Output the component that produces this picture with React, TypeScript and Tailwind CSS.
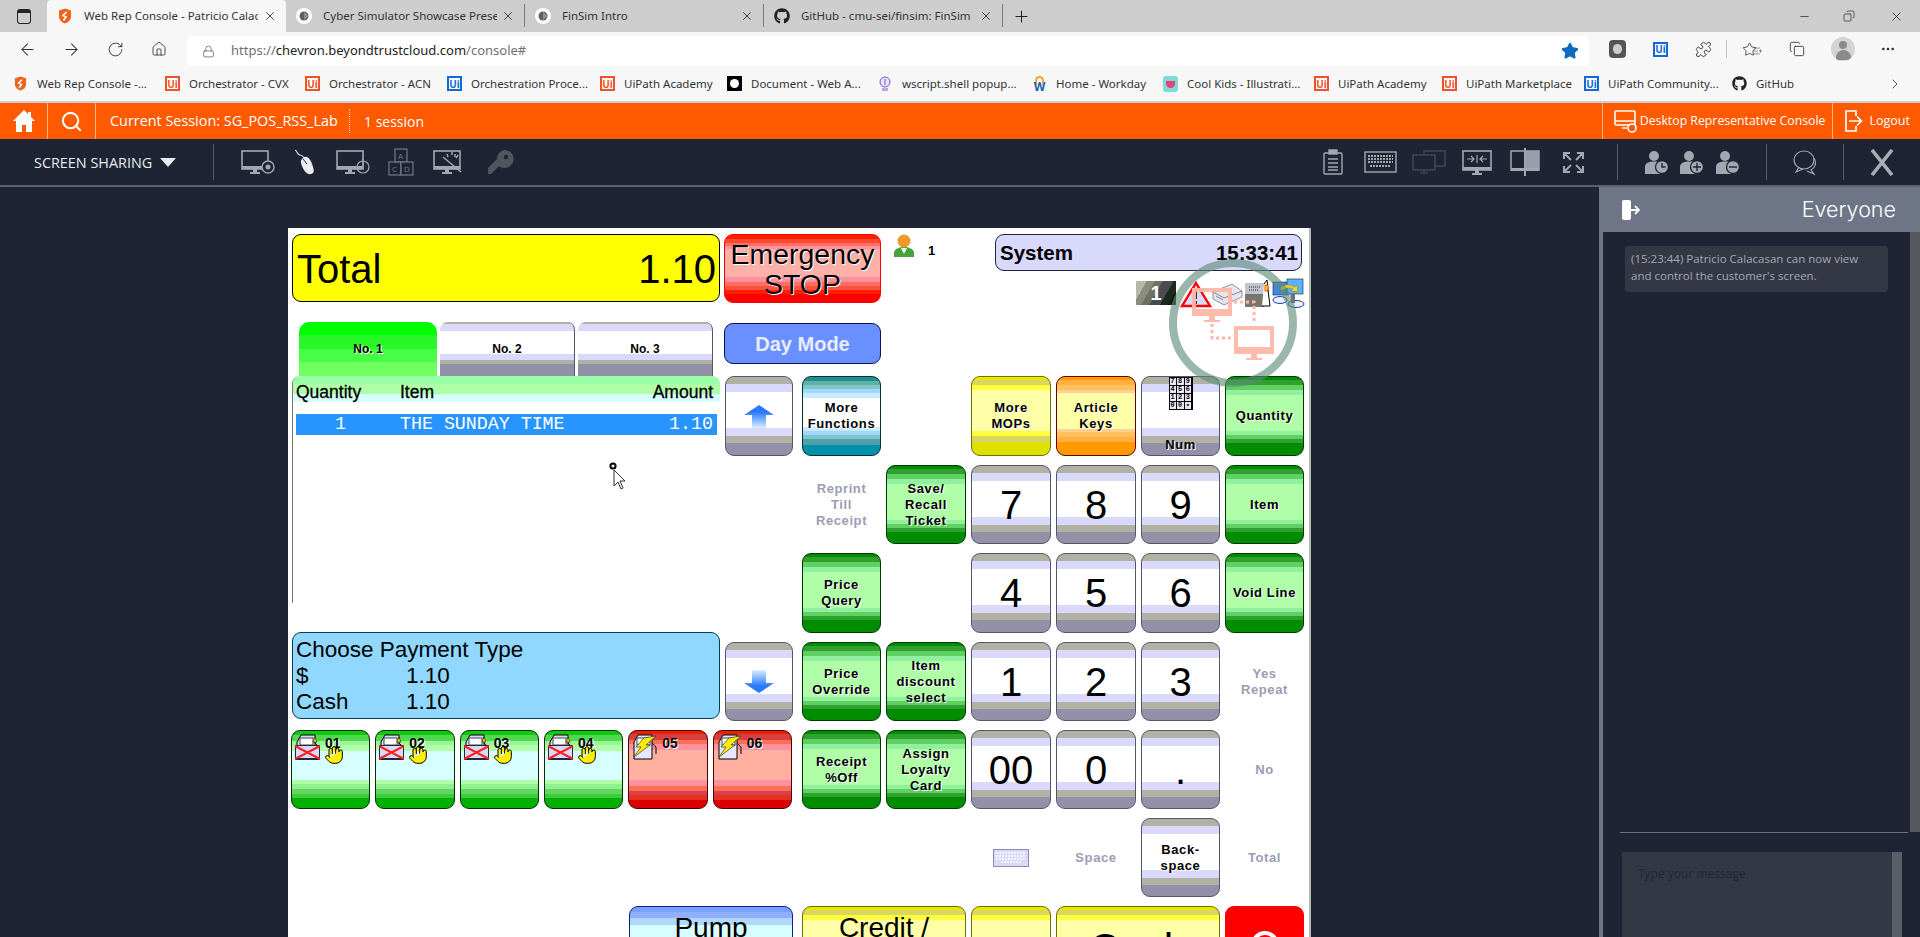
import React from "react";
import { ArrowLeft, ArrowRight, RotateCw, Home, Lock, Star, Puzzle, MoreHorizontal, Minus, X, Plus, ChevronRight, Search, Hand, ListPlus, Copy } from "lucide-react";
import { FaGithub } from "react-icons/fa";

const ICON = "#a3a7b0";

const tones = {
  grey: "border-[#55556e] bg-[linear-gradient(#b2b2a4_0_7px,#d9d9fb_7px_15px,#ffffff_15px_51px,#d9d9fb_51px_59px,#b2b2a4_59px_66px,#9391a8_66px)]",
  green: "border-[#003800] bg-[linear-gradient(#008c00_0_3px,#30a030_3px_8px,#60d060_8px_13px,#90f0a0_13px_18px,#b0ffa8_18px_54px,#90f0a0_54px_58px,#60d060_58px_62px,#30a030_62px_66px,#008c00_66px)]",
  yellow: "border-[#707000] bg-[linear-gradient(#e8e800_0_3px,#d8d860_3px_8px,#ffff40_8px_13px,#ffffa8_13px_54px,#ffff40_54px_59px,#d8d860_59px_65px,#e0e000_65px)]",
  orange: "border-[#600000] bg-[linear-gradient(#ff9900_0_3px,#ffb040_3px_8px,#ffc060_8px_13px,#ffd090_13px_16px,#ffffa8_16px_52px,#ffd090_52px_55px,#ffc060_55px_60px,#ffb040_60px_65px,#ff9900_65px)]",
  teal: "border-[#003038] bg-[linear-gradient(#208f90_0_4px,#60b0a8_4px_8px,#80c8c8_8px_12px,#a0d8ff_12px_16px,#c8ecff_16px_21px,#ffffff_21px_50px,#c8ecff_50px_54px,#a0d8ff_54px_58px,#80c8c8_58px_62px,#50a0a8_62px_68px,#0090a8_68px)]",
  pump: "border-[#003000] bg-[linear-gradient(#10c810_0_4px,#50d850_4px_10px,#98f898_10px_14px,#b0ffa8_14px_20px,#d8ffff_20px_49px,#b0ffa8_49px_53px,#90f090_53px_58px,#60d860_58px_63px,#40c840_63px_67px,#00b000_67px)]",
  red: "border-[#500000] bg-[linear-gradient(#e82000_0_3px,#d84040_3px_9px,#ff7050_9px_13px,#ff90a0_13px_19px,#ffb0a0_19px_49px,#ff90a0_49px_55px,#ff7050_55px_60px,#d84050_60px_64px,#e83020_64px_69px,#d80000_69px)]",
  blue: "border-[#102080] bg-[linear-gradient(#7aa0ff_0_5px,#90b0ff_5px_11px,#b0d8ff_11px_18px,#d8ffff_18px)]",
  solidRed: "border-[#ff0000] bg-[#ff0000]",
};

const labelText = "font-bold text-[13px] leading-[16px] tracking-[0.6px] text-center [text-shadow:1px_1px_0_#ffffff]";
const dimText = "font-bold text-[13px] leading-[16px] tracking-[0.6px] text-center text-[#9c9cb4]";

function Key({ tone, children, className = "" }: { tone: keyof typeof tones; children?: React.ReactNode; className?: string }) {
  return (
    <div className={`flex items-center justify-center rounded-[9px] border overflow-hidden text-black ${tones[tone]} ${className}`}>
      {children}
    </div>
  );
}

function Digit({ value, className }: { value: string; className: string }) {
  return <Key tone="grey" className={`text-[40px] leading-none ${className}`}><span>{value}</span></Key>;
}

function Shield({ size = 16 }: { size?: number }) {
  return (
    <svg width={size} height={size} viewBox="0 0 16 16">
      <path d="M8 0.5 14 2.5V8.5C14 12 11 14.5 8 15.5 5 14.5 2 12 2 8.5V2.5Z" fill="#f0641e" />
      <path d="M9.5 4 6 7.5 9 9 6.5 12.5" stroke="#fff" strokeWidth="1.6" fill="none" />
    </svg>
  );
}

function UiLogo({ tone }: { tone: "o" | "b" }) {
  return (
    <span className={`flex h-[15px] w-[15px] shrink-0 items-center justify-center border-2 bg-white text-[10px] font-bold leading-none ${tone === "o" ? "border-[#f0522a] text-[#f0522a]" : "border-[#0f6ad8] text-[#0f6ad8]"}`}>
      Ui
    </span>
  );
}

function Globe() {
  return (
    <svg width="16" height="16" viewBox="0 0 16 16">
      <circle cx="8" cy="8" r="8" fill="#fff" />
      <circle cx="8" cy="8" r="4.5" fill="#5a5f6a" />
      <path d="M8 3.5 12.5 8 8 12.5Z" fill="#8b8f98" />
    </svg>
  );
}

function BrowserTab({ icon, title, active }: { icon: React.ReactNode; title: string; active?: boolean }) {
  return (
    <div className={`flex h-8 w-[239px] shrink-0 items-center pl-[10px] ${active ? "rounded-t-[4px] bg-[#f7f7f7]" : "border-r border-[#7b7b7b] [border-image:linear-gradient(transparent_5px,#7b7b7b_5px,#7b7b7b_26px,transparent_26px)_1]"}`}>
      <span className="flex w-[27px] shrink-0 items-center">{icon}</span>
      <span className="w-[174px] overflow-hidden whitespace-nowrap text-[11.5px] text-[#333333]">{title}</span>
      <X size={14} strokeWidth={1.4} className="ml-auto mr-[9px] shrink-0 text-[#222222]" />
    </div>
  );
}

const bookmarks: { icon: React.ReactNode; label: string; width: string }[] = [
  { icon: <Shield size={15} />, label: "Web Rep Console -...", width: "w-[152px]" },
  { icon: <UiLogo tone="o" />, label: "Orchestrator - CVX", width: "w-[140px]" },
  { icon: <UiLogo tone="o" />, label: "Orchestrator - ACN", width: "w-[142px]" },
  { icon: <UiLogo tone="b" />, label: "Orchestration Proce...", width: "w-[153px]" },
  { icon: <UiLogo tone="o" />, label: "UiPath Academy", width: "w-[127px]" },
  { icon: <span className="block h-[15px] w-[15px] bg-black p-[3px]"><span className="block h-full w-full rounded-full bg-white" /></span>, label: "Document - Web A...", width: "w-[151px]" },
  {
    icon: (
      <svg width="14" height="16" viewBox="0 0 14 16">
        <circle cx="7" cy="6" r="5" fill="#e8e4ff" stroke="#6a5acd" />
        <rect x="4" y="12" width="6" height="3" fill="#c8a0e0" />
        <path d="M7 3V9" stroke="#6a5acd" />
      </svg>
    ),
    label: "wscript.shell popup...",
    width: "w-[154px]",
  },
  {
    icon: (
      <span className="relative block h-[16px] w-[15px]">
        <span className="absolute left-[3px] top-0 h-[9px] w-[9px] rounded-t-full border-2 border-b-0 border-[#f5a623]" />
        <span className="absolute left-0 right-0 top-[5px] text-center text-[12px] font-bold leading-[11px] text-[#1a5fb4]">W</span>
      </span>
    ),
    label: "Home - Workday",
    width: "w-[131px]",
  },
  {
    icon: (
      <span className="block h-[16px] w-[15px] rounded-[3px] bg-[#7fdad6] pt-[5px]">
        <span className="mx-auto block h-[7px] w-[9px] rounded-b-full bg-[#e0457b]" />
      </span>
    ),
    label: "Cool Kids - Illustrati...",
    width: "w-[151px]",
  },
  { icon: <UiLogo tone="o" />, label: "UiPath Academy", width: "w-[128px]" },
  { icon: <UiLogo tone="o" />, label: "UiPath Marketplace", width: "w-[142px]" },
  { icon: <UiLogo tone="b" />, label: "UiPath Community...", width: "w-[148px]" },
  { icon: <FaGithub size={15} className="text-[#222222]" />, label: "GitHub", width: "w-[155px]" },
];

function BrowserChrome() {
  return (
    <div className="font-['Noto_Sans',sans-serif]">
      <div className="flex h-8 items-center bg-[#cdcdcd]">
        <div className="flex w-[47px] shrink-0 justify-center pl-[1px]">
          <span className="block h-[15px] w-[14px] rounded-[3px] border-[1.5px] border-[#222222] border-t-[4px]" />
        </div>
        <BrowserTab active icon={<Shield />} title="Web Rep Console - Patricio Calacasan" />
        <BrowserTab icon={<Globe />} title="Cyber Simulator Showcase Presentation" />
        <BrowserTab icon={<Globe />} title="FinSim Intro" />
        <BrowserTab icon={<FaGithub size={16} className="text-[#222222]" />} title="GitHub - cmu-sei/finsim: FinSim" />
        <Plus size={19} strokeWidth={1.3} className="ml-[9px] text-[#222222]" />
        <div className="ml-auto flex items-center text-[#222222]">
          <Minus size={13} strokeWidth={1.3} className="mr-[32px]" />
          <Copy size={12} strokeWidth={1.3} className="mr-[34px] -scale-x-100" />
          <X size={15} strokeWidth={1.2} className="mr-[16px]" />
        </div>
      </div>

      <div className="flex h-[34px] items-center bg-[#f7f7f7] text-[#333333]">
        <ArrowLeft size={19} strokeWidth={1.3} className="ml-[18px]" />
        <ArrowRight size={19} strokeWidth={1.3} className="ml-[25px]" />
        <RotateCw size={17} strokeWidth={1.3} className="ml-[26px]" />
        <Home size={16} strokeWidth={1.3} className="ml-[27px]" />
        <div className="ml-[20px] mt-[4px] flex h-[30px] w-[1402px] items-center rounded-[4px] bg-white pl-[15px]">
          <Lock size={13} strokeWidth={1.3} className="text-[#555555]" />
          <span className="ml-[16px] text-[13px] text-[#6f6f6f]">https://<span className="text-[#222222]">chevron.beyondtrustcloud.com</span>/console#</span>
          <Star size={18} className="ml-auto mr-[10px] fill-[#0f6cbd] text-[#0f6cbd]" />
        </div>
        <span className="ml-[20px] block h-[18px] w-[17px] rounded-[4px] bg-[#555555] p-[4px]"><span className="block h-full w-full rounded-full bg-[#cccccc]" /></span>
        <span className="ml-[27px]"><UiLogo tone="b" /></span>
        <Puzzle size={17} strokeWidth={1.3} className="ml-[27px]" />
        <span className="ml-[14px] h-[18px] w-px bg-[#c4c4c4]" />
        <span className="ml-[15px] flex"><Star size={15} strokeWidth={1.3} /><ListPlus size={10} strokeWidth={1.2} className="-ml-[4px] mt-[4px]" /></span>
        <Copy size={16} strokeWidth={1.3} className="ml-[26px]" />
        <span className="ml-[26px] flex h-6 w-6 flex-col items-center justify-start overflow-hidden rounded-full bg-[#d3d3d3] pt-[4px]">
          <span className="h-[8px] w-[8px] rounded-full bg-[#8a8a8a]" />
          <span className="mt-[1px] h-[10px] w-[15px] rounded-t-full bg-[#8a8a8a]" />
        </span>
        <MoreHorizontal size={16} className="ml-[25px]" />
      </div>

      <div className="flex h-[37px] items-center border-b-2 border-[#cfcfcf] bg-[#f7f7f7] pl-[13px] text-[11.5px] text-[#333333]">
        {bookmarks.map((b, i) => (
          <div key={i} className={`flex shrink-0 items-center ${b.width}`}>
            <span className="flex w-[24px] shrink-0 items-center">{b.icon}</span>
            <span className="whitespace-nowrap">{b.label}</span>
          </div>
        ))}
        <ChevronRight size={16} strokeWidth={1.3} />
      </div>
    </div>
  );
}

function OrangeBar() {
  return (
    <div className="flex h-9 items-center bg-[#ff5a00] font-['Open_Sans',sans-serif] text-white">
      <div className="flex h-full w-[48px] items-center justify-center border-r border-[#ffb48a]">
        <svg width="24" height="24" viewBox="0 0 24 24" fill="#fff">
          <path d="M12 1 1 12H4V23H10V16H14V23H20V12H23L19 8V3H16V5Z" />
        </svg>
      </div>
      <div className="flex h-full w-[48px] items-center justify-center border-r border-[#ffb48a]">
        <Search size={23} strokeWidth={2.2} />
      </div>
      <span className="ml-[14px] w-[239px] whitespace-nowrap text-[14.4px]">Current Session: SG_POS_RSS_Lab</span>
      <span className="h-[24px] border-l border-dotted border-[#ffd0b0]" />
      <span className="ml-[14px] text-[14px]">1 session</span>
      <div className="ml-auto flex h-full items-center border-l border-[#ffb48a] pl-[11px] pr-[6px]">
        <svg width="23" height="24" viewBox="0 0 23 24" fill="none" stroke="#fff" strokeWidth="1.6">
          <rect x="1" y="2" width="20" height="14" rx="1" />
          <path d="M1 12H21M8 19H13" />
          <circle cx="18" cy="19" r="4" fill="#ff5a00" />
        </svg>
        <span className="ml-[3px] whitespace-nowrap text-[12.3px]">Desktop Representative Console</span>
      </div>
      <div className="flex h-full items-center border-l border-[#ffb48a] pl-[12px] pr-[10px] text-[12.5px]">
        <svg width="18" height="24" viewBox="0 0 18 24" fill="none" stroke="#fff" strokeWidth="1.7">
          <path d="M11 7V2H1V22H11V17M4 12H16M12 7.5 16.5 12 12 16.5" />
        </svg>
        <span className="ml-[7px]">Logout</span>
      </div>
    </div>
  );
}

function Monitor({ children, color = ICON, w = 30, h = 24, extra }: { children?: React.ReactNode; color?: string; w?: number; h?: number; extra?: React.ReactNode }) {
  return (
    <svg width={w + (extra ? 6 : 0)} height={h} viewBox={`0 0 ${w + (extra ? 6 : 0)} ${h}`} fill="none" stroke={color}>
      <rect x="1" y="1" width={w - 2} height={h - 6} fill="#1e2433" strokeWidth="1.6" />
      <rect x="1" y={h - 8} width={w - 2} height="3" fill={color} stroke="none" />
      <rect x={w / 2 - 2} y={h - 5} width="4" height="3" fill={color} stroke="none" />
      <rect x={w / 2 - 5} y={h - 2} width="10" height="2" fill={color} stroke="none" />
      {children}
      {extra}
    </svg>
  );
}

function UserBadge({ sign }: { sign: "clock" | "plus" | "minus" }) {
  return (
    <svg width="24" height="24" viewBox="0 0 24 24">
      <circle cx="9" cy="6" r="5" fill={ICON} />
      <path d="M0 24V17C0 13 4 11.5 9 11.5S18 13 18 17V24Z" fill={ICON} />
      <circle cx="17" cy="17" r="6.5" fill={ICON} stroke="#1e2433" strokeWidth="1.3" />
      {sign === "plus" && <path d="M17 13V21M13 17H21" stroke="#1e2433" strokeWidth="1.4" />}
      {sign === "minus" && <path d="M13 17H21" stroke="#1e2433" strokeWidth="1.4" />}
      {sign === "clock" && <path d="M17 13V17H20.5" stroke="#1e2433" strokeWidth="1.4" fill="none" />}
    </svg>
  );
}

const Sep = ({ className = "" }: { className?: string }) => <span className={`block h-9 w-px bg-[#565c6b] ${className}`} />;

function ToolBar() {
  return (
    <div className="flex h-12 items-center border-b-2 border-[#5b6170] bg-[#1e2433] pl-[34px] font-['Open_Sans',sans-serif]">
      <span className="w-[117px] whitespace-nowrap pt-[2px] text-[14.4px] text-[#e8eaee]">SCREEN SHARING</span>
      <span className="ml-[9px] h-0 w-0 border-x-[8px] border-t-[9px] border-x-transparent border-t-[#e8eaee]" />
      <Sep className="ml-[37px]" />
      <span className="ml-[27px]">
        <Monitor w={28} extra={<g><circle cx="27" cy="17" r="6" fill="#1e2433" stroke={ICON} strokeWidth="1.4" /><circle cx="27" cy="17" r="2.5" fill={ICON} stroke="none" /></g>} />
      </span>
      <svg className="ml-[19px]" width="22" height="26" viewBox="0 0 22 26" fill="none">
        <path d="M1 1C4 2 2 5 6 6S9 8 10 9" stroke="#d8dadf" strokeWidth="1.1" />
        <path d="M9 9C12 6 16 9 18 15S21 24 17 25 10 22 8 17 7 11 9 9Z" fill="#eceef1" />
        <path d="M9 10 13 15" stroke="#1e2433" />
      </svg>
      <span className="ml-[20px]">
        <Monitor w={28} extra={<path d="M27 11A6 6 0 1 1 27 23 6 6 0 0 1 27 11ZM27 9V16" stroke={ICON} strokeWidth="1.2" />} />
      </span>
      <svg className="ml-[18px]" width="26" height="28" viewBox="0 0 26 28" fill="#1e2433" stroke="#747986" strokeWidth="1.2">
        <rect x="7" y="1" width="12" height="13" />
        <rect x="1" y="14" width="12" height="13" />
        <rect x="13" y="14" width="12" height="13" />
        <text x="10" y="11" fontSize="8" fill="#747986" stroke="none">A</text>
        <text x="4" y="24" fontSize="8" fill="#747986" stroke="none">C</text>
        <text x="16" y="24" fontSize="8" fill="#747986" stroke="none">D</text>
      </svg>
      <span className="ml-[19px]">
        <Monitor w={28} extra={<path d="M10 7 28 22M22 4V7M25 5 23 8M14 4 15 7M19 2V5" stroke={ICON} strokeWidth="1.5" />} />
      </span>
      <svg className="ml-[20px]" width="27" height="26" viewBox="0 0 27 26" fill="#50555f">
        <path d="M17 1A9 9 0 1 1 12 17L4 25H1V19L10 10A9 9 0 0 1 17 1Z" />
        <circle cx="19" cy="8" r="2.2" fill="#1e2433" />
      </svg>

      <div className="ml-auto flex items-center pr-[26px]">
        <svg width="20" height="26" viewBox="0 0 20 26" fill="none" stroke={ICON} strokeWidth="1.4">
          <rect x="1" y="4" width="18" height="21" rx="1" />
          <rect x="6" y="1" width="8" height="4" fill={ICON} />
          <path d="M5 10H15M5 14H15M5 18H15M5 21H15" strokeWidth="1.6" />
        </svg>
        <svg className="ml-[21px]" width="33" height="22" viewBox="0 0 33 22" fill="none" stroke={ICON}>
          <rect x="1" y="1" width="31" height="20" strokeWidth="1.4" />
          <path d="M4 5H29M4 8H29M4 11H29M6 15H27" strokeWidth="2" strokeDasharray="2 1" />
        </svg>
        <svg className="ml-[15px]" width="34" height="24" viewBox="0 0 34 24" fill="none" stroke="#454a57" strokeWidth="1.4">
          <rect x="12" y="1" width="21" height="15" />
          <rect x="1" y="5" width="22" height="15" fill="#1e2433" />
          <path d="M12 20V23M8 23H16" />
        </svg>
        <span className="ml-[16px]">
          <Monitor w={30} h={25}><path d="M5 9H12M9 6 12 9 9 12M25 9H18M21 6 18 9 21 12M15 5V13" strokeWidth="1.2" /></Monitor>
        </span>
        <svg className="ml-[18px]" width="30" height="29" viewBox="0 0 30 29">
          <rect x="1" y="3" width="28" height="19" fill="none" stroke={ICON} strokeWidth="1.5" />
          <rect x="15" y="3" width="14" height="19" fill="#9a9ea8" />
          <rect x="14" y="0" width="2" height="28" fill={ICON} />
          <rect x="1" y="20" width="28" height="3" fill={ICON} />
        </svg>
        <svg className="ml-[22px]" width="23" height="23" viewBox="0 0 23 23" fill="none" stroke={ICON} strokeWidth="2">
          <path d="M2 8V2H8M2 2 9 9M15 2H21V8M21 2 14 9M2 15V21H8M2 21 9 14M21 15V21H15M21 21 14 14" />
        </svg>
        <Sep className="ml-[32px]" />
        <span className="ml-[27px]"><UserBadge sign="clock" /></span>
        <span className="ml-[11px]"><UserBadge sign="plus" /></span>
        <span className="ml-[12px]"><UserBadge sign="minus" /></span>
        <Sep className="ml-[26px]" />
        <svg className="ml-[26px]" width="25" height="26" viewBox="0 0 25 26" fill="none" stroke={ICON} strokeWidth="1.2">
          <ellipse cx="11" cy="11" rx="10" ry="9" />
          <path d="M6 18 3 23 10 20" />
          <path d="M21 9C24 14 22 19 18 21L21 25 14 22" />
        </svg>
        <Sep className="ml-[25px]" />
        <svg className="ml-[26px]" width="24" height="27" viewBox="0 0 24 27" stroke="#a9adb5" strokeWidth="3.6">
          <path d="M2 1 22 26M22 1 2 26" />
        </svg>
      </div>
    </div>
  );
}

function PumpIcon({ crossed, bolt }: { crossed?: boolean; bolt?: boolean }) {
  return (
    <svg width="27" height="28" viewBox="0 0 27 28">
      <path d="M3 9 7 2H21V26H3Z" fill={crossed ? "#d9d9fb" : "#e6e6fc"} stroke="#000" />
      <rect x="6" y="5" width="13" height="7" fill="#fff" stroke="#444" />
      <path d="M21 10 25 14V21" stroke="#000" fill="none" />
      {crossed && (
        <g>
          <path d="M1 12H26V27H1Z" fill="#26263a" />
          <path d="M2 13H25V25H2Z" fill="#d9d9fb" />
          <path d="M1 13 26 26M26 13 1 26" stroke="#ff2020" strokeWidth="2" />
          <path d="M21 4 23 9H19Z" fill="#ffd800" stroke="#000" strokeWidth="0.5" />
        </g>
      )}
      {bolt && <path d="M13 5 25 3 15 12 19 12 3 24 10 14 5 14Z" fill="#ffee00" stroke="#333" strokeWidth="0.7" />}
    </svg>
  );
}

function PumpKey({ no, tone }: { no: string; tone: "pump" | "red" }) {
  const crossed = tone === "pump";
  return (
    <Key tone={tone} className="relative !items-start !justify-start">
      <span className="ml-[2px] mt-[2px]"><PumpIcon crossed={crossed} bolt={!crossed} /></span>
      <span className="absolute left-[33px] top-[2px] text-[14px] font-bold [text-shadow:1px_1px_0_#ffffff]">{no}</span>
      {crossed && <Hand size={20} className="absolute left-[32px] top-[14px] fill-[#ffee00] text-black" strokeWidth={1.2} />}
    </Key>
  );
}

function Arrow({ down }: { down?: boolean }) {
  const id = down ? "arrow-d" : "arrow-u";
  return (
    <svg width="30" height="23" viewBox="0 0 30 23" className={down ? "rotate-180" : ""}>
      <defs>
        <linearGradient id={id} x1="0" y1="0" x2="0" y2="1">
          <stop offset="0.3" stopColor="#2a78ff" />
          <stop offset="1" stopColor="#d8f0ff" />
        </linearGradient>
      </defs>
      <path d="M15 0 30 10H22V23H8V10H0Z" fill={`url(#${id})`} />
    </svg>
  );
}

function NumIcon() {
  return (
    <div className="grid w-[24px] grid-cols-3 gap-[1px] bg-black p-[1px] font-['Liberation_Mono',monospace] text-[7px] font-bold leading-[7px]">
      {["7", "8", "9", "4", "5", "6", "1", "2", "3", "0", "0", "•"].map((c, i) => (
        <span key={i} className="bg-[#e4e4f4] text-center">{c}</span>
      ))}
    </div>
  );
}

function StatusIcons() {
  return (
    <div className="flex items-start">
      <div className="mt-[3px] flex h-[24px] w-[40px] items-center justify-center bg-[linear-gradient(120deg,#b8b8a8_0_20%,#8c8c7c_20%_35%,#70705f_35%_50%,#4a4a52_50%_70%,#1c2a1c_70%_85%,#101810_85%)] text-[20px] font-bold text-white">1</div>
      <svg className="ml-[4px] mt-[3px]" width="32" height="27" viewBox="0 0 32 27">
        <path d="M16 2 30 25H2Z" fill="#d9d9fb" stroke="#ff0000" strokeWidth="2.4" />
        <path d="M16 9V18M16 20V23" stroke="#333" strokeWidth="2" />
      </svg>
      <svg width="31" height="24" viewBox="0 0 31 24" className="mt-[4px]">
        <path d="M1 10 20 2 30 9V15L12 23 1 17Z" fill="#e6e6ee" stroke="#777" strokeWidth="0.8" />
        <path d="M1 10 12 16 30 9M4 14 11 18" stroke="#888" fill="none" />
      </svg>
      <svg width="28" height="30" viewBox="0 0 28 30" className="ml-[1px]">
        <rect x="1" y="5" width="19" height="24" fill="#77786c" />
        <rect x="1" y="5" width="19" height="11" fill="#c4c4d0" />
        <path d="M5 9H16M5 12H14" stroke="#222" strokeDasharray="1 1" />
        <path d="M20 6 23 2 24 12 26 28H18" fill="#fff" stroke="#000" />
        <rect x="21" y="7" width="3" height="6" fill="#ffd000" stroke="#c00" strokeWidth="0.6" />
      </svg>
      <svg width="33" height="30" viewBox="0 0 33 30">
        <rect x="1" y="4" width="15" height="13" fill="#3f86f0" stroke="#123" strokeWidth="0.6" />
        <rect x="15" y="1" width="16" height="15" fill="#58b4ff" stroke="#123" strokeWidth="0.6" />
        <path d="M8 10C12 6 18 6 22 9L25 7 26 14 19 13 21 11C17 9 13 10 10 13Z" fill="#f2d335" stroke="#8a7000" strokeWidth="0.5" />
        <ellipse cx="8" cy="22" rx="7" ry="3.5" fill="#e8f0ff" stroke="#1a3fa0" />
        <ellipse cx="24" cy="26" rx="8" ry="3.5" fill="#e8f0ff" stroke="#1a3fa0" />
        <rect x="19" y="16" width="4" height="9" fill="#70707c" />
      </svg>
    </div>
  );
}

const tabGrey = "ml-[3px] flex h-[54px] w-[135px] items-center justify-center rounded-t-[8px] border-r border-[#555566] bg-[linear-gradient(#b2b2a4_0_2px,#d9d9fb_2px_9px,#ffffff_9px_32px,#d9d9fb_32px_38px,#b2b2a4_38px_42px,#9391a8_42px)] text-[12px] font-bold";

function PosScreen() {
  return (
    <div className="relative ml-[288px] mt-[41px] h-[800px] w-[1023px] shrink-0 border-r-2 border-[#b4b8b4] bg-white pl-[4px] pt-[6px] font-['Liberation_Sans',Arial,sans-serif] text-black">
      {/* top strip */}
      <div className="flex h-[142px]">
        <div className="w-[428px]">
          <div className="flex h-[68px] items-center justify-between rounded-[9px] border border-black bg-[#ffff00] pl-[4px] pr-[3px] pt-[1px] text-[40px]">
            <span>Total</span>
            <span>1.10</span>
          </div>
          <div className="ml-[7px] mt-[20px] flex">
            <div className="flex h-[54px] w-[138px] items-center justify-center rounded-t-[10px] bg-[linear-gradient(#00ff00_0_13px,#28f828_13px_27px,#48ff48_27px_40px,#70ff60_40px)] text-[12px] font-bold [text-shadow:1px_1px_0_#ffffff]">No. 1</div>
            <div className={tabGrey}>No. 2</div>
            <div className={tabGrey}>No. 3</div>
          </div>
        </div>
        <div className="ml-[4px] w-[157px]">
          <Key tone="red" className="h-[69px] flex-col !border-[#ff0000] !bg-[linear-gradient(#ff2000_0_4px,#ff4830_4px_8px,#ff7060_8px_11px,#ff90a0_11px_14px,#ffb0a8_14px_42px,#ff90a0_42px_47px,#ff7060_47px_51px,#ff5040_51px_55px,#ff2000_55px_59px,#ff0000_59px)] text-[28.5px] leading-[30px] [text-shadow:1px_1px_0_#ffffff]">
            <span>Emergency</span>
            <span>STOP</span>
          </Key>
          <div className="mt-[20px] flex h-[41px] items-center justify-center rounded-[9px] border border-[#0a1450] bg-[#6a8fff] text-[20px] font-bold text-[#e8ecff]">Day Mode</div>
        </div>
        <div className="ml-[13px] flex h-[23px] w-[100px] items-center">
          <svg width="20" height="23" viewBox="0 0 20 23">
            <path d="M0 23V18C1 15 5 13 10 13S19 15 20 18V23Z" fill="#4aa33a" />
            <path d="M7 14 10 20 13 14Z" fill="#e8ffe0" />
            <circle cx="10" cy="7" r="6.5" fill="#f09a2c" />
          </svg>
          <span className="ml-[14px] mt-[10px] text-[13px] font-bold">1</span>
        </div>
        <div className="ml-[1px] w-[307px]">
          <div className="flex h-[37px] items-center justify-between rounded-[9px] border border-[#222238] bg-[#d9d9fb] pl-[4px] pr-[3px] pt-[1px] text-[20.5px] font-bold">
            <span>System</span>
            <span>15:33:41</span>
          </div>
          <div className="-mr-[3px] mt-[7px] flex justify-end"><StatusIcons /></div>
        </div>
      </div>

      {/* main key grid */}
      <div className="grid grid-cols-[428px_72px_79px_80px_80px_80px_79px_79px] grid-rows-[80px_79px_80px_79px_79px_79px_79px] gap-x-[5px] gap-y-[9px]">
        <div className="col-start-1 row-span-4 row-start-1 flex flex-col">
          <div className="relative h-[227px] rounded-tl-[8px] border-l border-[#77776a]">
            <div className="flex h-[26px] items-start justify-between rounded-t-[8px] bg-[linear-gradient(#98ffa8_0_8px,#b0ffa8_8px_18px,#d8ffff_18px)] pl-[3px] pr-[7px] pt-[6px] text-[17.5px] leading-[20px] [-webkit-text-stroke:0.3px_#000000]">
              <span className="w-[104px]">Quantity</span>
              <span className="mr-auto">Item</span>
              <span>Amount</span>
            </div>
            <div className="ml-[3px] mr-[3px] mt-[12px] flex h-[21px] items-center bg-[#2894ff] font-['Liberation_Mono',monospace] text-[18.3px] text-white">
              <span className="w-[104px] pl-[39px]">1</span>
              <span>THE SUNDAY TIME</span>
              <span className="ml-auto pr-[4px]">1.10</span>
            </div>
          </div>
          <div className="mt-[29px] h-[87px] rounded-[9px] border border-[#004050] bg-[#90d8ff] pl-[3px] pt-[4px] text-[22.5px] leading-[26px]">
            <div>Choose Payment Type</div>
            <div className="flex"><span className="w-[110px]">$</span><span>1.10</span></div>
            <div className="flex"><span className="w-[110px]">Cash</span><span>1.10</span></div>
          </div>
        </div>

        {/* row 1 */}
        <Key tone="grey" className="col-start-2 row-start-1 mr-[4px]"><Arrow /></Key>
        <Key tone="teal" className={`col-start-3 row-start-1 ${labelText}`}><span>More<br />Functions</span></Key>
        <Key tone="yellow" className={`col-start-5 row-start-1 ${labelText}`}><span>More<br />MOPs</span></Key>
        <Key tone="orange" className={`col-start-6 row-start-1 ${labelText}`}><span>Article<br />Keys</span></Key>
        <Key tone="grey" className={`relative col-start-7 row-start-1 !items-start ${labelText}`}>
          <NumIcon />
          <span className="absolute bottom-[2px] left-0 right-0">Num</span>
        </Key>
        <Key tone="green" className={`col-start-8 row-start-1 ${labelText}`}>Quantity</Key>

        {/* row 2 */}
        <div className={`col-start-3 row-start-2 flex items-center justify-center ${dimText}`}><span>Reprint<br />Till<br />Receipt</span></div>
        <Key tone="green" className={`col-start-4 row-start-2 ${labelText}`}><span>Save/<br />Recall<br />Ticket</span></Key>
        <Digit value="7" className="col-start-5 row-start-2" />
        <Digit value="8" className="col-start-6 row-start-2" />
        <Digit value="9" className="col-start-7 row-start-2" />
        <Key tone="green" className={`col-start-8 row-start-2 ${labelText}`}>Item</Key>

        {/* row 3 */}
        <Key tone="green" className={`col-start-3 row-start-3 ${labelText}`}><span>Price<br />Query</span></Key>
        <Digit value="4" className="col-start-5 row-start-3" />
        <Digit value="5" className="col-start-6 row-start-3" />
        <Digit value="6" className="col-start-7 row-start-3" />
        <Key tone="green" className={`col-start-8 row-start-3 ${labelText}`}>Void Line</Key>

        {/* row 4 */}
        <Key tone="grey" className="col-start-2 row-start-4 mr-[4px]"><Arrow down /></Key>
        <Key tone="green" className={`col-start-3 row-start-4 ${labelText}`}><span>Price<br />Override</span></Key>
        <Key tone="green" className={`col-start-4 row-start-4 ${labelText}`}><span>Item<br />discount<br />select</span></Key>
        <Digit value="1" className="col-start-5 row-start-4" />
        <Digit value="2" className="col-start-6 row-start-4" />
        <Digit value="3" className="col-start-7 row-start-4" />
        <div className={`col-start-8 row-start-4 flex items-center justify-center ${dimText}`}><span>Yes<br />Repeat</span></div>

        {/* row 5 */}
        <div className="col-span-2 col-start-1 row-start-5 -ml-px grid w-[501px] grid-cols-6 gap-x-[5px]">
          <PumpKey no="01" tone="pump" />
          <PumpKey no="02" tone="pump" />
          <PumpKey no="03" tone="pump" />
          <PumpKey no="04" tone="pump" />
          <PumpKey no="05" tone="red" />
          <PumpKey no="06" tone="red" />
        </div>
        <Key tone="green" className={`col-start-3 row-start-5 ${labelText}`}><span>Receipt<br />%Off</span></Key>
        <Key tone="green" className={`col-start-4 row-start-5 ${labelText}`}><span>Assign<br />Loyalty<br />Card</span></Key>
        <Digit value="00" className="col-start-5 row-start-5" />
        <Digit value="0" className="col-start-6 row-start-5" />
        <Digit value="." className="col-start-7 row-start-5" />
        <div className={`col-start-8 row-start-5 flex items-center justify-center ${dimText}`}>No</div>

        {/* row 6 */}
        <div className="col-start-5 row-start-6 flex items-center justify-center">
          <svg width="36" height="18" viewBox="0 0 36 18">
            <rect x="0.5" y="0.5" width="35" height="17" fill="#d9d9fb" stroke="#8c8cb0" />
            <path d="M3 4H33M3 7H33M3 10H33M8 13H28" stroke="#f4f4ff" strokeWidth="2" strokeDasharray="2 1" />
          </svg>
        </div>
        <div className={`col-start-6 row-start-6 flex items-center justify-center ${dimText}`}>Space</div>
        <Key tone="grey" className={`col-start-7 row-start-6 ${labelText}`}><span>Back-<br />space</span></Key>
        <div className={`col-start-8 row-start-6 flex items-center justify-center ${dimText}`}>Total</div>

        {/* row 7, cut by the window */}
        <div className="col-span-2 col-start-1 row-start-7 flex justify-end pr-[4px]">
          <Key tone="blue" className="h-[79px] w-[164px] !items-start pt-[5px] text-[28px] leading-[32px]">Pump</Key>
        </div>
        <Key tone="yellow" className="col-span-2 col-start-3 row-start-7 !items-start pt-[5px] text-[28px] leading-[32px]">Credit /</Key>
        <Key tone="yellow" className="col-start-5 row-start-7" />
        <Key tone="yellow" className="col-span-2 col-start-6 row-start-7 !items-start pt-[20px] text-[42px] leading-[44px]">Cash</Key>
        <Key tone="solidRed" className="col-start-8 row-start-7 !items-start pt-[24px]">
          <span className="block h-[28px] w-[28px] rounded-full border-4 border-white" />
        </Key>
      </div>

      {/* remote mouse pointer */}
      <svg className="absolute left-[321px] top-[234px]" width="18" height="30" viewBox="0 0 18 30">
        <circle cx="4" cy="4" r="2.6" fill="none" stroke="#000" strokeWidth="2" />
        <path d="M5 8V24L9 20 12 27 14 26 11 19H16Z" fill="#fff" stroke="#333" />
      </svg>

      {/* session overlay */}
      <svg className="absolute left-[881px] top-[31px]" width="128" height="128" viewBox="0 0 128 128">
        <circle cx="64" cy="64" r="60" fill="none" stroke="#5a8a78" strokeOpacity="0.62" strokeWidth="8" />
        <g fill="#ffb8a8" fillOpacity="0.95">
          <path fillRule="evenodd" d="M23 29H63V57H23ZM27 33V50H59V33Z" />
          <path d="M40 57H46V61H51V63H35V61H40Z" />
          <path fillRule="evenodd" d="M65 67H105V95H65ZM69 71V88H101V71Z" />
          <path d="M82 95H88V99H93V101H77V99H82Z" />
        </g>
        <path d="M43 65V79H63M65 43H85V65" fill="none" stroke="#ffb8a8" strokeWidth="3" strokeDasharray="3 3" />
      </svg>
    </div>
  );
}

function ChatPanel() {
  return (
    <div className="flex w-[321px] shrink-0 flex-col border-l-4 border-[#6d7587] font-['Open_Sans',sans-serif]">
      <div className="flex h-[45px] shrink-0 items-center justify-between bg-[#6d7587] pl-[19px] pr-[24px]">
        <svg width="18" height="20" viewBox="0 0 18 20">
          <rect x="0" y="0" width="9" height="20" rx="2" fill="#fff" />
          <path d="M9 10H17M13 6 17 10 13 14" stroke="#fff" strokeWidth="1.8" fill="none" />
        </svg>
        <span className="font-['Inter',sans-serif] text-[21.5px] font-light text-white">Everyone</span>
      </div>
      <div className="flex h-[600px] shrink-0">
        <div className="flex-1 pl-[22px] pr-[22px] pt-[14px]">
          <div className="h-[46px] w-[263px] rounded-[4px] bg-[#343845] px-[6px] pt-[4px] text-[11.5px] leading-[17px] text-[#a4a8b2]">
            (15:23:44) Patricio Calacasan can now view<br />and control the customer's screen.
          </div>
        </div>
        <div className="w-[10px] bg-[#55585f]" />
      </div>
      <div className="ml-[17px] mr-[12px] h-px shrink-0 bg-[#6a7080]" />
      <div className="ml-[19px] mt-[19px] flex h-[120px] w-[280px] shrink-0 bg-[#343845]">
        <span className="flex-1 pl-[16px] pt-[13px] text-[12px] text-[#222734]">Type your message</span>
        <span className="w-[10px] bg-[#5b5f68]" />
      </div>
    </div>
  );
}

export default function App() {
  return (
    <div className="flex h-[937px] w-[1920px] flex-col overflow-hidden bg-[#1e2433]">
      <BrowserChrome />
      <OrangeBar />
      <ToolBar />
      <div className="flex min-h-0 flex-1 justify-between overflow-hidden">
        <PosScreen />
        <ChatPanel />
      </div>
    </div>
  );
}
